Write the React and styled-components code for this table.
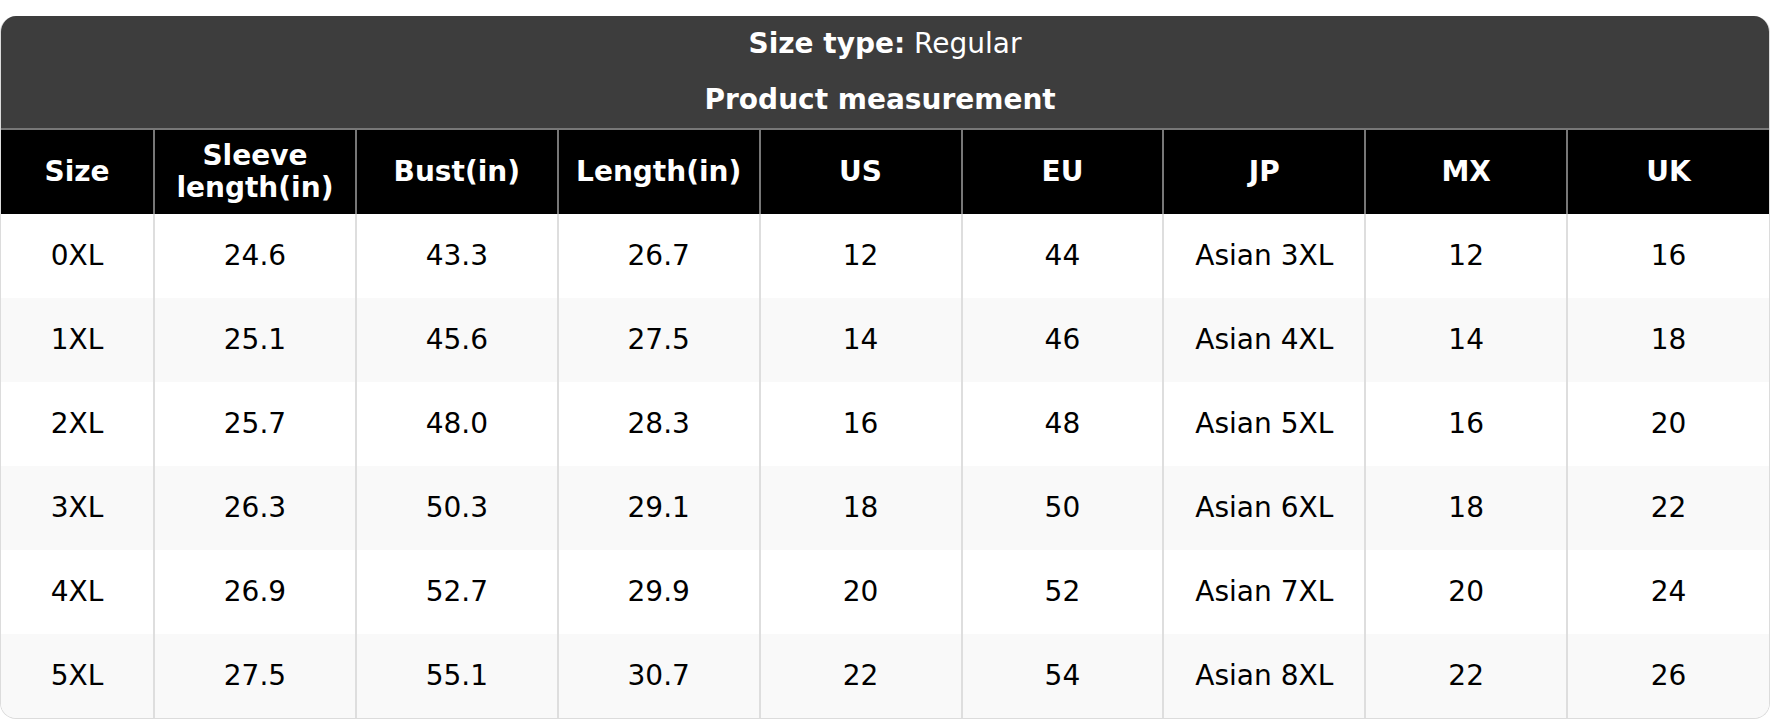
import React from "react";
import styled, { createGlobalStyle } from "styled-components";

const Global = createGlobalStyle`
  html, body { margin: 0; padding: 0; background: #fff; }
  body { font-family: "DejaVu Sans", "Liberation Sans", sans-serif; }
  * { box-sizing: border-box; }
`;

const Card = styled.div`
  margin-top: 16px;
  width: 1770px;
  border: 1px solid #dcdcdc;
  border-top: 0;
  border-radius: 16px;
  overflow: hidden;
  background: #fff;
`;

const TitleBlock = styled.div`
  background: #3d3d3d;
  color: #fff;
  padding: 12px 0 12px;
  display: flex;
  flex-direction: column;
  align-items: center;
  gap: 24px;
  font-size: 28px;
  line-height: 32px;
`;

const TitleLine = styled.div`
  font-weight: ${(p) => (p.$bold ? 700 : 400)};
  text-align: center;
  white-space: pre;
`;

const Strong = styled.span`
  font-weight: 700;
`;

const Table = styled.table`
  width: 100%;
  border-collapse: collapse;
  table-layout: fixed;
  font-size: 28px;
  line-height: 32px;
`;

const HeadCell = styled.th`
  background: #000;
  color: #fff;
  font-weight: 700;
  text-align: center;
  padding: 10px 6px;
  border-top: 2px solid #777;
  border-left: 2px solid #777;
  border-right: 2px solid #777;
  &:first-child { border-left: 0; }
  &:last-child { border-right: 0; }
`;

const Row = styled.tr`
  background: ${(p) => (p.$alt ? "#f9f9f9" : "#fff")};
`;

const Cell = styled.td`
  color: #000;
  text-align: center;
  padding: 26px 6px;
  border-left: 2px solid #dedede;
  border-right: 2px solid #dedede;
  &:first-child { border-left: 0; }
  &:last-child { border-right: 0; }
`;

const headers = [
  "Size",
  "Sleeve length(in)",
  "Bust(in)",
  "Length(in)",
  "US",
  "EU",
  "JP",
  "MX",
  "UK",
];

const rows = [
  ["0XL", "24.6", "43.3", "26.7", "12", "44", "Asian 3XL", "12", "16"],
  ["1XL", "25.1", "45.6", "27.5", "14", "46", "Asian 4XL", "14", "18"],
  ["2XL", "25.7", "48.0", "28.3", "16", "48", "Asian 5XL", "16", "20"],
  ["3XL", "26.3", "50.3", "29.1", "18", "50", "Asian 6XL", "18", "22"],
  ["4XL", "26.9", "52.7", "29.9", "20", "52", "Asian 7XL", "20", "24"],
  ["5XL", "27.5", "55.1", "30.7", "22", "54", "Asian 8XL", "22", "26"],
];

export default function App() {
  return (
    <>
      <Global />
      <Card>
        <TitleBlock>
          <TitleLine>
            <Strong>Size type:</Strong> Regular
          </TitleLine>
          <TitleLine $bold>{"Product measurement\u00a0"}</TitleLine>
        </TitleBlock>
        <Table>
          <colgroup>
            <col style={{ width: "153px" }} />
            {headers.slice(1).map((h) => (
              <col key={h} />
            ))}
          </colgroup>
          <thead>
            <tr>
              {headers.map((h) => (
                <HeadCell key={h}>{h}</HeadCell>
              ))}
            </tr>
          </thead>
          <tbody>
            {rows.map((r, i) => (
              <Row key={r[0]} $alt={i % 2 === 1}>
                {r.map((v, j) => (
                  <Cell key={j}>{v}</Cell>
                ))}
              </Row>
            ))}
          </tbody>
        </Table>
      </Card>
    </>
  );
}
